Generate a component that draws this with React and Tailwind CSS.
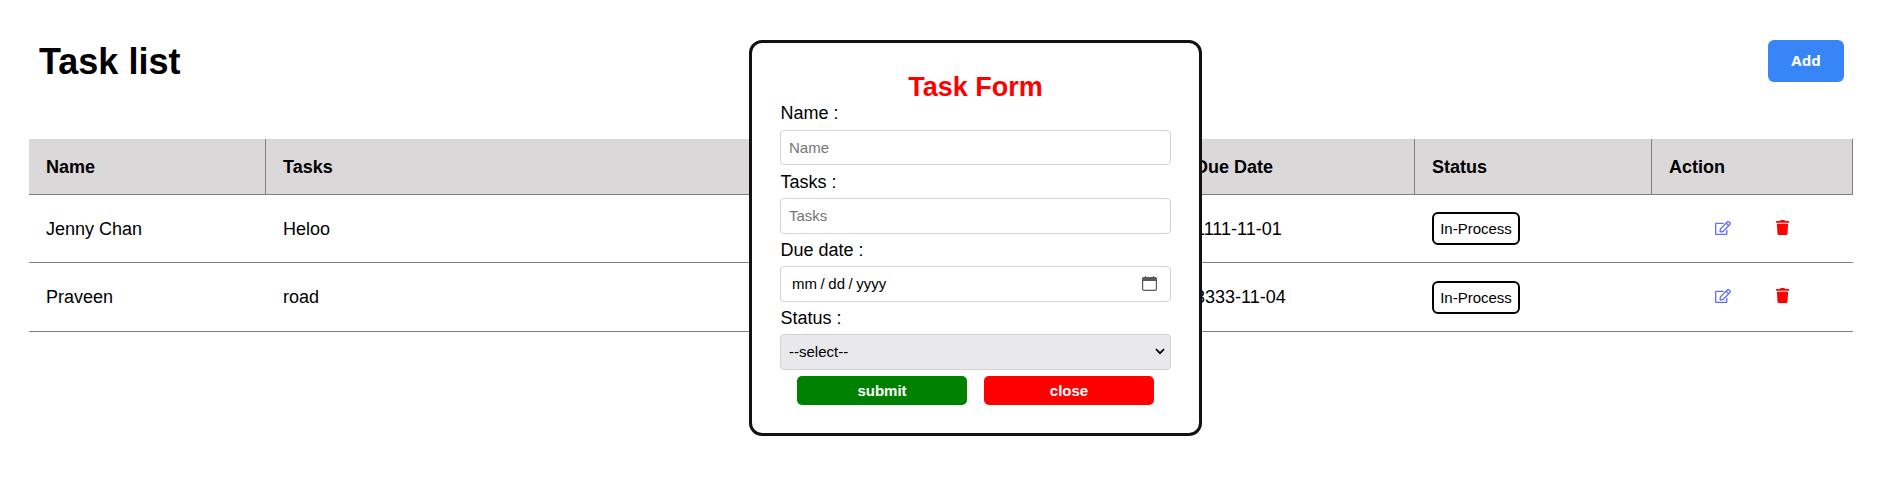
import { FaRegEdit, FaTrash } from "react-icons/fa";

const rows = [
  { name: "Jenny Chan", task: "Heloo", due: "1111-11-01", status: "In-Process" },
  { name: "Praveen", task: "road", due: "3333-11-04", status: "In-Process" },
];

const columns = "grid grid-cols-[237px_912px_237px_237px_201px]";
const headCell = "flex items-center border-r border-[#808080] pt-[2px] pr-[17px] pl-[17px]";
const bodyCell = "flex items-center px-[17px]";
const field =
  "flex w-full items-center rounded-[4px] border border-[#d3d3d3] px-[8px] text-[15px] leading-[17px]";
const label = "flex h-[32px] items-center pl-[0.5px] leading-[21px]";

function Row({ row, height, textPad, iconPad }) {
  return (
    <div className={`${columns} ${height} border-b border-[#808080]`}>
      <div className={`${bodyCell} ${textPad}`}>{row.name}</div>
      <div className={`${bodyCell} ${textPad}`}>{row.task}</div>
      <div className={`${bodyCell} ${textPad}`}>{row.due}</div>
      <div className={bodyCell}>
        <span className="flex h-[33px] w-[88px] items-center justify-center rounded-[6px] border-2 border-black text-[15px]">
          {row.status}
        </span>
      </div>
      <div className={`flex items-center gap-[44px] pl-[63px] ${iconPad}`}>
        <FaRegEdit className="size-[16px] text-[#646cff]" />
        <FaTrash className="size-[15px] text-[#ff0000]" />
      </div>
    </div>
  );
}

function TaskForm() {
  return (
    <div className="absolute left-[749px] top-[40px] h-[396px] w-[453px] rounded-[13px] border-[3px] border-[#121212] bg-white px-[28px] pt-[29px]">
      <h2 className="text-center text-[27px] font-bold leading-[31px] text-[#ff0000]">Task Form</h2>
      <label className="flex h-[27px] items-start pl-[0.5px] leading-[21px]">Name :</label>
      <div className={`${field} h-[35px] text-[#757575]`}>Name</div>
      <label className="flex h-[33px] items-center pt-[2px] pl-[0.5px] leading-[21px]">Tasks :</label>
      <div className={`${field} h-[36px] pb-[2px] text-[#757575]`}>Tasks</div>
      <label className={label}>Due date :</label>
      <div className={`${field} h-[36px] justify-between pb-[2px]`}>
        <span className="pl-[3px] [word-spacing:-0.6px]">mm / dd / yyyy</span>
        <svg className="mr-[5px] size-[15px]" viewBox="0 0 15 15" fill="none">
          <path d="M0 3a2 2 0 0 1 2-2h1V0h1v1h7V0h1v1h1a2 2 0 0 1 2 2v2H0Z" fill="#5b5b5b" />
          <rect x=".6" y="1.8" width="13.8" height="12.6" rx="1.4" stroke="#5b5b5b" strokeWidth="1.2" />
        </svg>
      </div>
      <label className={label}>Status :</label>
      <div className={`${field} h-[36px] justify-between bg-[#e9e9ed] pb-px`}>
        <span>--select--</span>
        <svg className="mr-[-3px] h-[7px] w-[10px]" viewBox="0 0 10 7" fill="none">
          <path d="M1 1.2 5 5.2 9 1.2" stroke="#000" strokeWidth="1.7" />
        </svg>
      </div>
      <div className="mt-[6px] flex justify-center gap-[17px] text-[15px] font-bold text-white">
        <button className="h-[29px] w-[170px] rounded-[5px] bg-[#008000]">submit</button>
        <button className="h-[29px] w-[170px] rounded-[5px] bg-[#ff0000]">close</button>
      </div>
    </div>
  );
}

export default function App() {
  return (
    <div className="relative h-[496px] w-full overflow-hidden bg-white px-[29px] pt-[40px] font-['Liberation_Sans',Arial,sans-serif] text-[18px] leading-[21px] text-black">
      <header className="flex h-[99px] items-start justify-between pl-[10px] pr-[7px]">
        <h1 className="pt-px text-[36px] font-bold leading-[42px]">Task list</h1>
        <button className="h-[42px] w-[76px] rounded-[6px] bg-[#3885f7] pb-px font-['Noto_Sans','Open_Sans',sans-serif] text-[15px] font-bold text-white">
          Add
        </button>
      </header>
      <div className="w-[1824px]">
        <div className={`${columns} h-[56px] border-b border-[#808080] bg-[#dad8d9] font-bold`}>
          <div className={headCell}>Name</div>
          <div className={headCell}>Tasks</div>
          <div className={headCell}>Due Date</div>
          <div className={headCell}>Status</div>
          <div className={headCell}>Action</div>
        </div>
        <Row row={rows[0]} height="h-[68px]" textPad="pt-[2px]" iconPad="pb-[2px]" />
        <Row row={rows[1]} height="h-[69px]" textPad="pt-0" iconPad="pb-[3px]" />
      </div>
      <TaskForm />
    </div>
  );
}
